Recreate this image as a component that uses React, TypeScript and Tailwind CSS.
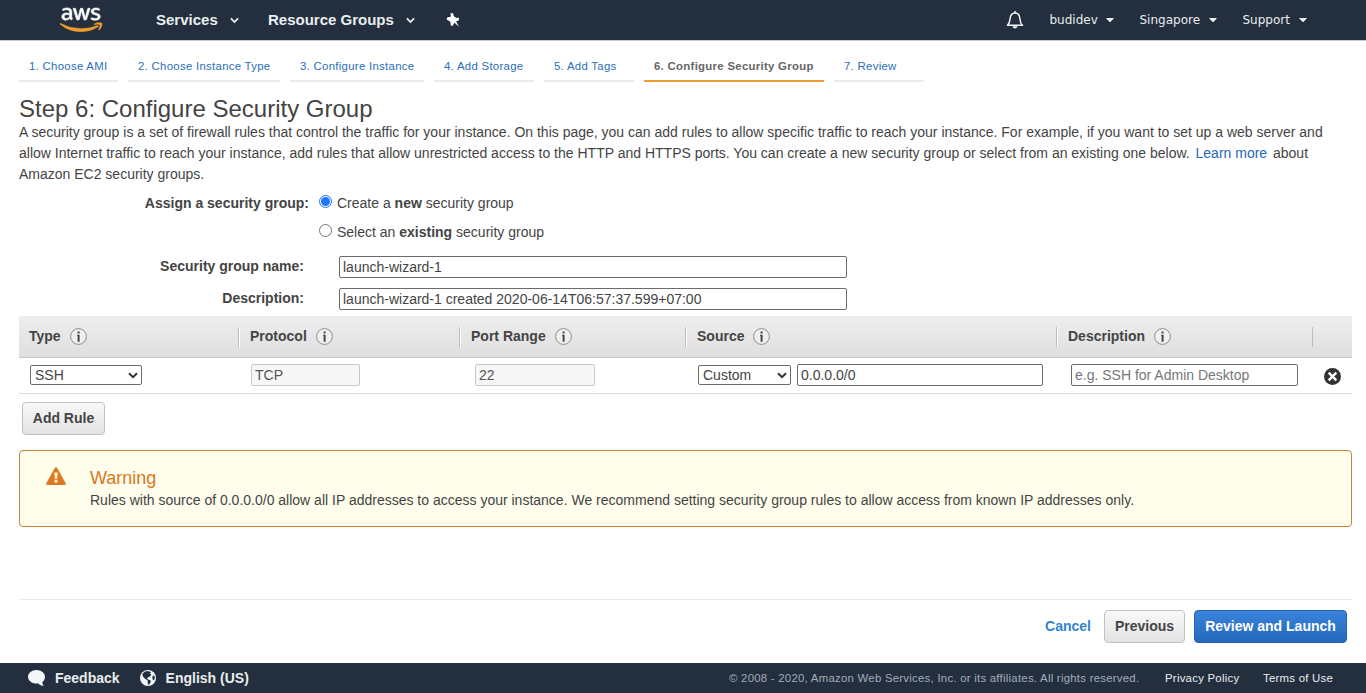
import React from "react";
import { FaAws, FaCaretDown } from "react-icons/fa";

function Chevron({ className }: { className?: string }) {
  return (
    <svg viewBox="0 0 10 7" className={className} fill="none" stroke="currentColor" strokeWidth="2">
      <path d="M1 1.2 5 5.2 9 1.2" />
    </svg>
  );
}

function Logo() {
  return (
    <>
      <svg width="0" height="0" className="absolute">
        <linearGradient id="aws" x1="0" y1="0" x2="0" y2="1">
          <stop offset="0.58" stopColor="#ffffff" />
          <stop offset="0.58" stopColor="#f29d2c" />
        </linearGradient>
      </svg>
      <FaAws
        className="h-[31.5px] w-[42px] overflow-visible"
        preserveAspectRatio="none"
        fill="url(#aws)"
        stroke="url(#aws)"
        strokeWidth={10}
      />
    </>
  );
}

function Info() {
  return (
    <svg width="17" height="17" viewBox="0 0 17 17" className="ml-[9px]">
      <circle cx="8.5" cy="8.5" r="7.9" fill="#f0f0f0" stroke="#8c8c8c" />
      <path d="M7.600 3.500h2v1.900h-2zM7 6.700h2.600v7h-2V7.700H7z" fill="#444" />
    </svg>
  );
}

const tabs = [
  { label: "1. Choose AMI", size: "w-[99px]" },
  { label: "2. Choose Instance Type", size: "w-[152px]" },
  { label: "3. Configure Instance", size: "w-[134px]" },
  { label: "4. Add Storage", size: "w-[100px]" },
  { label: "5. Add Tags", size: "w-[90px]" },
  { label: "6. Configure Security Group", size: "w-[180px]", active: true },
  { label: "7. Review", size: "w-[90px]" },
];

const columns = [
  { label: "Type", size: "w-[220px]" },
  { label: "Protocol", size: "w-[221px]" },
  { label: "Port Range", size: "w-[226px]" },
  { label: "Source", size: "w-[371px]" },
  { label: "Description", size: "w-[256px]" },
];

const field = "rounded-[2px] border border-[#6b6b6b] bg-white px-[3px] text-sm text-[#444] placeholder:text-[#777]";
const disabled = "h-[22px] rounded-[2px] border border-[#c8c8c8] bg-[#f7f7f7] px-[3px] text-sm text-[#555]";
const greyButton =
  "h-[33px] rounded-[4px] border border-[#c1c1c1] bg-linear-to-b from-[#f8f8f8] to-[#e3e3e3] pb-[2px] text-sm font-bold text-[#444]";

function Picker({ value, className }: { value: string; className: string }) {
  return (
    <div className={`relative flex h-5 items-center ${className}`}>
      <select className="h-5 w-full appearance-none rounded-[2px] border border-[#6b6b6b] bg-white pl-1 text-sm leading-[18px] text-[#444]">
        <option>{value}</option>
      </select>
      <Chevron className="pointer-events-none absolute right-[4px] h-[7px] w-[10px] text-[#333]" />
    </div>
  );
}

function Radio({ checked }: { checked?: boolean }) {
  return checked ? (
    <span className="mr-[5px] mb-[2px] flex size-[13px] items-center justify-center rounded-full border border-[#1f75fe] bg-white">
      <span className="size-[9px] rounded-full bg-[#1f75fe]" />
    </span>
  ) : (
    <span className="mr-[5px] mb-[2px] size-[13px] rounded-full border border-[#767676] bg-white" />
  );
}

function AccountMenu({ label, className }: { label: string; className: string }) {
  return (
    <div className={`flex items-center justify-between ${className}`}>
      {label}
      <FaCaretDown className="mb-[2px] h-[13px] w-[8px]" />
    </div>
  );
}

export default function App() {
  return (
    <div className="flex h-[693px] w-[1366px] flex-col overflow-hidden bg-white font-['Liberation_Sans',sans-serif] text-sm text-[#444]">
      <header className="flex h-10 shrink-0 items-center bg-[#232f3e] pl-[60px] text-[#eaeded]">
        <Logo />
        <div className="ml-[54px] flex w-[83px] items-center justify-between text-[15px] font-bold">
          Services
          <Chevron className="mt-[2px] h-[7px] w-[9px]" />
        </div>
        <div className="ml-[29px] flex w-[147px] items-center justify-between text-[15px] font-bold">
          Resource Groups
          <Chevron className="mt-[2px] h-[7px] w-[9px]" />
        </div>
        <svg viewBox="0 0 14 14" className="ml-[31px] h-[14px] w-[14px]" fill="#fff">
          <path d="M4.200.6 6.500 0 7.500 1.300 7.600 3l2.700 1.900 1.900-.4 1 1.300-.4 1.400-2.700 1.400 2.900 5.200-4.500-4L6.500 13 4.700 12.600 4.400 8.700 1.800 7.200.7 6.400 1 4.800 2.200 3.900 4.500 4.100 4.900 2.200z" />
        </svg>
        <div className="ml-auto flex items-center pr-[59.5px] font-['DejaVu_Sans',sans-serif] text-[12px]">
          <svg viewBox="0 0 18 18" className="mr-[25.5px] h-[18px] w-[18px]" fill="none" stroke="#f4f6f8" strokeWidth="1.5">
            <path d="M1.500 14.200c1.700-1.500 2.300-3.200 2.500-6C4.300 4.500 5.800 2 9 2s4.700 2.500 5 6.200c.2 2.800.8 4.500 2.500 6z" strokeLinejoin="round" />
            <path d="M9 .3v1.500" strokeWidth="2" />
            <path d="M6.500 15.200h5c-.4 1.500-1.200 2.200-2.500 2.200s-2.100-.7-2.500-2.200z" fill="#f4f6f8" stroke="none" />
          </svg>
          <div className="flex pt-[2px]">
            <AccountMenu label="budidev" className="w-[64px]" />
            <AccountMenu label="Singapore" className="ml-[26px] w-[77px]" />
            <AccountMenu label="Support" className="ml-[26px] w-[64px]" />
          </div>
        </div>
      </header>

      <main className="flex flex-1 flex-col border-t border-[#c9ced3] pr-[14px] pl-[19px]">
        <nav className="flex h-[41px] shrink-0 gap-[10px] pt-[11px] text-[11.4px] tracking-[0.29px]">
          {tabs.map((t) => (
            <a
              key={t.label}
              className={`${t.size} h-[30px] shrink-0 border-b-2 pl-[10px] leading-7 whitespace-nowrap ${
                t.active ? "border-[#ec9b31] font-bold text-[#666]" : "border-[#eaeaea] text-[#2a6ebb]"
              }`}
            >
              {t.label}
            </a>
          ))}
        </nav>

        <h1 className="mt-[13px] text-2xl leading-[27px]">Step 6: Configure Security Group</h1>
        <p className="leading-[21px] whitespace-nowrap">
          A security group is a set of firewall rules that control the traffic for your instance. On this page, you can
          add rules to allow specific traffic to reach your instance. For example, if you want to set up a web server and
          <br />
          allow Internet traffic to reach your instance, add rules that allow unrestricted access to the HTTP and HTTPS
          ports. You can create a new security group or select from an existing one below.{" "}
          <a className="mx-[2px] text-[#1f66b8]">Learn more</a> about
          <br />
          Amazon EC2 security groups.
        </p>

        <div className="mt-[7px] flex h-[21px] items-center">
          <b className="mr-[10px] w-[290px] text-right">Assign a security group:</b>
          <Radio checked />
          <span>
            Create a <b>new</b> security group
          </span>
        </div>
        <div className="mt-[8px] flex h-[21px] items-center pl-[300px]">
          <Radio />
          <span>
            Select an <b>existing</b> security group
          </span>
        </div>
        <div className="mt-[14px] flex h-[22px] items-center">
          <b className="mr-[35px] w-[285px] pb-[2px] text-right">Security group name:</b>
          <input className={`${field} h-[22px] w-[508px]`} defaultValue="launch-wizard-1" />
        </div>
        <div className="mt-[10px] flex h-[22px] items-center">
          <b className="mr-[35px] w-[285px] pb-[2px] text-right">Description:</b>
          <input
            className={`${field} h-[22px] w-[508px]`}
            defaultValue="launch-wizard-1 created 2020-06-14T06:57:37.599+07:00"
          />
        </div>

        <section className="mt-[6px]">
          <div className="flex h-[42px] items-center border-b border-[#c9c9c9] bg-linear-to-b from-[#eeeeee] to-[#dfdfdf]">
            {columns.map((c, i) => (
              <div
                key={c.label}
                className={`${c.size} flex h-5 shrink-0 items-center border-r border-[#bdbdbd] font-bold ${
                  i === 0 ? "pl-[10px]" : "border-l border-l-white pl-[10px]"
                }`}
              >
                <span className="pb-[1px]">{c.label}</span>
                <Info />
              </div>
            ))}
          </div>
          <div className="flex h-[36px] items-center border-b border-[#dddddd] pb-[1px] pl-[11px]">
            <Picker value="SSH" className="w-[112px]" />
            <input disabled className={`${disabled} ml-[109px] w-[109px]`} defaultValue="TCP" />
            <input disabled className={`${disabled} ml-[115px] w-[120px]`} defaultValue="22" />
            <Picker value="Custom" className="ml-[103px] w-[93px]" />
            <input className={`${field} ml-[6px] h-[22px] w-[246px]`} defaultValue="0.0.0.0/0" />
            <input className={`${field} ml-[28px] h-[22px] w-[227px]`} placeholder="e.g. SSH for Admin Desktop" />
            <svg width="17" height="17" viewBox="0 0 17 17" className="mt-[3px] ml-[26px]">
              <circle cx="8.500" cy="8.500" r="8.500" fill="#333" />
              <path d="M4.700 4.700l7.600 7.600M12.300 4.700l-7.600 7.600" stroke="#fff" strokeWidth="2.400" />
            </svg>
          </div>
        </section>

        <button className={`${greyButton} mt-[8px] ml-[3px] w-[83px] shrink-0`}>Add Rule</button>

        <section className="mt-[15px] flex h-[77px] shrink-0 rounded-[4px] border border-[#cf7f3c] bg-[#fffeec] pt-[16px] pl-[26px]">
          <svg width="20" height="18" viewBox="0 0 20 18" className="mr-[24px]">
            <path d="M8.900.8q1.100-1.300 2.200 0l8.600 15.500q.5 1.700-1.200 1.700h-17Q-.2 18 .3 16.300z" fill="#dd7a21" />
            <path d="M8.300 5.500h3.400l-.6 6.200H8.900zM8.500 12.800h3v2.700h-3z" fill="#fff6d8" />
          </svg>
          <div>
            <h2 className="text-lg leading-[22px] text-[#d9781e]">Warning</h2>
            <p className="mt-[1px] leading-[21px]">
              Rules with source of 0.0.0.0/0 allow all IP addresses to access your instance. We recommend setting
              security group rules to allow access from known IP addresses only.
            </p>
          </div>
        </section>

        <div className="mt-auto flex h-[64px] shrink-0 items-start justify-end border-t border-[#e8e8e8] pt-[10px] pr-[5px] font-bold">
          <a className="mr-[13px] leading-8 text-[#3184d0]">Cancel</a>
          <button className={`${greyButton} mr-[9px] w-[81px]`}>Previous</button>
          <button className="h-[33px] w-[153px] rounded-[4px] border border-[#2365b5] bg-linear-to-b from-[#3983dc] to-[#2468bb] pb-[2px] text-white">
            Review and Launch
          </button>
        </div>
      </main>

      <footer className="flex h-[30px] shrink-0 items-center bg-[#232f3e] pr-[32px] pl-[28px] font-bold text-[#eaeded]">
        <svg width="17" height="16" viewBox="0 0 17 16" fill="#f4f7fa">
          <path d="M8.500 0C3.800 0 0 3 0 6.800s3.800 6.800 8.500 6.800l1.800-.1c1.400 1.500 3.200 2.300 5.500 2.300-1-1-1.500-2.200-1.400-3.700C16 10.800 17 8.900 17 6.800 17 3 13.200 0 8.500 0z" />
        </svg>
        <span className="ml-[10px]">Feedback</span>
        <svg width="16" height="16" viewBox="0 0 16 16" className="ml-[20px]">
          <circle cx="8" cy="8" r="8" fill="#f4f7fa" />
          <path d="M2.500 3.500 5.500 1.300 9 1.200l2.200 1-1.400 1.500 1.600.8-1.700 2.300-2 .6-.6 1.500 1.400.5-.6 1L5 8.700 2.800 6.500zM12.500 6l1.800-.6.6 2.600-1 2.500-1.500-1.500zM7.500 9.500l2.800.8.6 1.500-1.700 2.700-1.200.1-.3-2.400z" fill="#232f3e" />
        </svg>
        <span className="ml-[10px]">English (US)</span>
        <div className="ml-auto flex gap-[24px] text-[11.4px] font-normal tracking-[0.25px]">
          <span className="w-[412px] whitespace-nowrap text-[#a2adb8]">
            © 2008 - 2020, Amazon Web Services, Inc. or its affiliates. All rights reserved.
          </span>
          <span className="w-[74px] whitespace-nowrap">Privacy Policy</span>
          <span className="w-[71px] whitespace-nowrap">Terms of Use</span>
        </div>
      </footer>
    </div>
  );
}
